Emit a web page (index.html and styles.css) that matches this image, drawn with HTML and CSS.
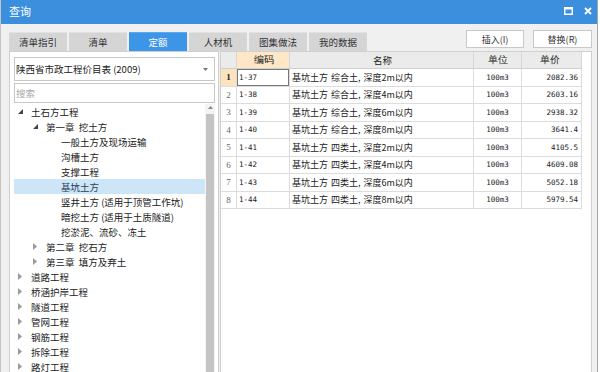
FILE: index.html
```html
<!DOCTYPE html>
<html lang="zh">
<head>
<meta charset="utf-8">
<title>查询</title>
<link rel="stylesheet" href="styles.css">
</head>
<body>
<div class="window">
  <div class="titlebar">
    <span class="title">查询</span>
    <div class="controls">
      <svg class="ico-max" width="9" height="8" viewBox="0 0 9 8"><rect x="0.75" y="0.75" width="7.5" height="6.5" fill="none" stroke="#fff" stroke-width="1.5"/><rect x="0" y="0" width="9" height="2.5" fill="#fff"/></svg>
      <svg class="ico-close" width="8" height="8" viewBox="0 0 8 8"><path d="M1 1L7 7M7 1L1 7" stroke="#fff" stroke-width="1.8"/></svg>
    </div>
  </div>
  <div class="body">
    <div class="topbar">
      <div class="tabs">
        <div class="tab">清单指引</div>
        <div class="tab">清单</div>
        <div class="tab active">定额</div>
        <div class="tab">人材机</div>
        <div class="tab">图集做法</div>
        <div class="tab">我的数据</div>
      </div>
      <div class="actions">
        <div class="btn btn-insert">插入(I)</div>
        <div class="btn btn-replace">替换(R)</div>
      </div>
    </div>
    <div class="main">
      <div class="left">
        <div class="select">
          <span>陕西省市政工程价目表 (2009)</span>
          <svg width="5" height="3" viewBox="0 0 5 3"><polygon points="0,0 5,0 2.5,3" fill="#777"/></svg>
        </div>
        <div class="search">搜索</div>
        <div class="treewrap">
          <div class="tree">
            <div class="node l0"><span class="exp"><svg width="5" height="5" viewBox="0 0 5 5"><polygon points="5,0 5,5 0,5" fill="#444"/></svg></span>土石方工程</div>
            <div class="node l1"><span class="exp"><svg width="5" height="5" viewBox="0 0 5 5"><polygon points="5,0 5,5 0,5" fill="#444"/></svg></span>第一章&nbsp; 挖土方</div>
            <div class="node l2"><span class="exp"></span>一般土方及现场运输</div>
            <div class="node l2"><span class="exp"></span>沟槽土方</div>
            <div class="node l2"><span class="exp"></span>支撑工程</div>
            <div class="node l2 selected"><span class="exp"></span>基坑土方</div>
            <div class="node l2"><span class="exp"></span>竖井土方 (适用于顶管工作坑)</div>
            <div class="node l2"><span class="exp"></span>暗挖土方 (适用于土质隧道)</div>
            <div class="node l2"><span class="exp"></span>挖淤泥、流砂、冻土</div>
            <div class="node l1"><span class="exp"><svg width="4" height="7" viewBox="0 0 4 7"><polygon points="0,0 4,3.5 0,7" fill="#999"/></svg></span>第二章&nbsp; 挖石方</div>
            <div class="node l1"><span class="exp"><svg width="4" height="7" viewBox="0 0 4 7"><polygon points="0,0 4,3.5 0,7" fill="#999"/></svg></span>第三章&nbsp; 填方及弃土</div>
            <div class="node l0"><span class="exp"><svg width="4" height="7" viewBox="0 0 4 7"><polygon points="0,0 4,3.5 0,7" fill="#999"/></svg></span>道路工程</div>
            <div class="node l0"><span class="exp"><svg width="4" height="7" viewBox="0 0 4 7"><polygon points="0,0 4,3.5 0,7" fill="#999"/></svg></span>桥涵护岸工程</div>
            <div class="node l0"><span class="exp"><svg width="4" height="7" viewBox="0 0 4 7"><polygon points="0,0 4,3.5 0,7" fill="#999"/></svg></span>隧道工程</div>
            <div class="node l0"><span class="exp"><svg width="4" height="7" viewBox="0 0 4 7"><polygon points="0,0 4,3.5 0,7" fill="#999"/></svg></span>管网工程</div>
            <div class="node l0"><span class="exp"><svg width="4" height="7" viewBox="0 0 4 7"><polygon points="0,0 4,3.5 0,7" fill="#999"/></svg></span>钢筋工程</div>
            <div class="node l0"><span class="exp"><svg width="4" height="7" viewBox="0 0 4 7"><polygon points="0,0 4,3.5 0,7" fill="#999"/></svg></span>拆除工程</div>
            <div class="node l0"><span class="exp"><svg width="4" height="7" viewBox="0 0 4 7"><polygon points="0,0 4,3.5 0,7" fill="#999"/></svg></span>路灯工程</div>
          </div>
          <div class="scrollbar">
            <svg class="up" width="5" height="3" viewBox="0 0 5 3"><polygon points="0,3 5,3 2.5,0" fill="#888"/></svg>
            <div class="thumb"></div>
          </div>
        </div>
      </div>
      <div class="grid">
        <div class="row head">
          <div class="c num"></div>
          <div class="c code hl">编码</div>
          <div class="c name center">名称</div>
          <div class="c unit">单位</div>
          <div class="c price center">单价</div>
        </div>
        <div class="row current">
          <div class="c num">1</div>
          <div class="c code sel">1-37</div>
          <div class="c name">基坑土方 综合土, 深度2m以内</div>
          <div class="c unit">100m3</div>
          <div class="c price">2082.36</div>
        </div>
        <div class="row">
          <div class="c num">2</div>
          <div class="c code">1-38</div>
          <div class="c name">基坑土方 综合土, 深度4m以内</div>
          <div class="c unit">100m3</div>
          <div class="c price">2603.16</div>
        </div>
        <div class="row">
          <div class="c num">3</div>
          <div class="c code">1-39</div>
          <div class="c name">基坑土方 综合土, 深度6m以内</div>
          <div class="c unit">100m3</div>
          <div class="c price">2938.32</div>
        </div>
        <div class="row">
          <div class="c num">4</div>
          <div class="c code">1-40</div>
          <div class="c name">基坑土方 综合土, 深度8m以内</div>
          <div class="c unit">100m3</div>
          <div class="c price">3641.4</div>
        </div>
        <div class="row">
          <div class="c num">5</div>
          <div class="c code">1-41</div>
          <div class="c name">基坑土方 四类土, 深度2m以内</div>
          <div class="c unit">100m3</div>
          <div class="c price">4105.5</div>
        </div>
        <div class="row">
          <div class="c num">6</div>
          <div class="c code">1-42</div>
          <div class="c name">基坑土方 四类土, 深度4m以内</div>
          <div class="c unit">100m3</div>
          <div class="c price">4609.08</div>
        </div>
        <div class="row">
          <div class="c num">7</div>
          <div class="c code">1-43</div>
          <div class="c name">基坑土方 四类土, 深度6m以内</div>
          <div class="c unit">100m3</div>
          <div class="c price">5052.18</div>
        </div>
        <div class="row">
          <div class="c num">8</div>
          <div class="c code">1-44</div>
          <div class="c name">基坑土方 四类土, 深度8m以内</div>
          <div class="c unit">100m3</div>
          <div class="c price">5979.54</div>
        </div>
      </div>
    </div>
  </div>
</div>
</body>
</html>
```

FILE: styles.css
```css
* { box-sizing: border-box; }
html, body { margin: 0; padding: 0; background: #fff; }
body {
  width: 600px;
  height: 372px;
  overflow: hidden;
  font-family: "Noto Sans CJK SC", "Noto Sans", sans-serif;
  font-size: 9px;
  color: #222;
}
.window {
  width: 598px;
  height: 372px;
  display: flex;
  flex-direction: column;
  background: #f0f0f0;
  border-left: 1px solid #c4c4c4;
  border-right: 1px solid #a8a8a8;
  overflow: hidden;
}
.titlebar {
  height: 24px;
  flex: none;
  background: #3b8fdc;
  display: flex;
  align-items: center;
  padding: 0 5px 0 8px;
}
.title {
  color: #fff;
  font-size: 11px;
  line-height: 1;
  margin-top: -1px;
}
.controls {
  margin-left: auto;
  display: flex;
  align-items: center;
  gap: 11px;
  margin-top: -3px;
}
.controls svg { display: block; }
.body {
  flex: 1;
  display: flex;
  flex-direction: column;
  padding: 6px 5px 0 8px;
  min-height: 0;
}
.topbar {
  display: flex;
  align-items: flex-start;
  height: 21px;
  flex: none;
}
.tabs {
  display: flex;
  gap: 2px;
  margin-top: 2px;
}
.tab {
  width: 58px;
  height: 19px;
  background: #d5d5d5;
  border-top: 1px solid #e2e2e2;
  color: #333;
  display: flex;
  align-items: center;
  justify-content: center;
  font-size: 9.5px;
}
.tab.active {
  background: #3c95e6;
  border-top-color: #5aa8ee;
  color: #fff;
}
.actions {
  margin-left: auto;
  display: flex;
  gap: 9px;
}
.btn {
  height: 18px;
  background: #fff;
  border: 1px solid #c8c8c8;
  display: flex;
  align-items: center;
  justify-content: center;
  color: #333;
  font-size: 9px;
}
.btn-insert { width: 58px; }
.btn-replace { width: 59px; }
.main {
  flex: 1;
  display: flex;
  min-height: 0;
}
.left {
  width: 210px;
  margin-right: 1px;
  background: #fff;
  border: 1px solid #cfcfcf;
  border-bottom: none;
  padding: 5px 3px 0 4px;
  display: flex;
  flex-direction: column;
}
.select {
  height: 24px;
  border: 1px solid #c8c8c8;
  display: flex;
  align-items: center;
  padding: 0 6px 0 1px;
  font-size: 9.5px;
  color: #222;
}
.select svg { margin-left: auto; display: block; }
.search {
  margin-top: 2px;
  height: 20px;
  border: 1px solid #c8c8c8;
  display: flex;
  align-items: center;
  padding-left: 1px;
  color: #a8a8a8;
  font-size: 9.5px;
}
.treewrap {
  flex: 1;
  display: flex;
  min-height: 0;
  padding-top: 1px;
}
.tree { flex: 1; }
.node {
  height: 15px;
  display: flex;
  align-items: center;
  font-size: 9.5px;
  color: #222;
  white-space: nowrap;
}
.node.l0 { padding-left: 4px; }
.node.l1 { padding-left: 19px; }
.node.l2 { padding-left: 34px; }
.node.selected { background: #cce5f7; color: #2a3e55; }
.exp {
  width: 13px;
  flex: none;
  display: flex;
  align-items: center;
}
.exp svg { display: block; }
.scrollbar {
  width: 10px;
  flex: none;
  background: #f4f4f4;
  display: flex;
  flex-direction: column;
  align-items: center;
}
.scrollbar .up { margin-top: 2px; display: block; }
.thumb {
  margin-top: 5px;
  width: 8px;
  flex: 1;
  background: #c4c4c4;
}
.grid {
  flex: 1;
  background: #fff;
  border: 1px solid #cfcfcf;
  border-bottom: none;
}
.row {
  display: grid;
  grid-template-columns: 16px 53px 184px 48px 60px;
  height: 17.5px;
}
.row.head { height: 17px; }
.c {
  border-right: 1px solid #dcdcdc;
  border-bottom: 1px solid #dcdcdc;
  display: flex;
  align-items: center;
  white-space: nowrap;
  overflow: hidden;
}
.head .c {
  background: #ebebeb;
  border-right-color: #d6d6d6;
  border-bottom-color: #d0d0d0;
  font-size: 9.5px;
  color: #222;
  justify-content: center;
}
.head .c.hl { background: #fde7c6; }
.num {
  justify-content: center;
  font-family: "Liberation Serif", serif;
  font-size: 9px;
  color: #666;
}
.current .num { background: #fbe3bd; color: #222; font-weight: bold; }
.code {
  padding-left: 2px;
  font-family: "DejaVu Sans Mono", monospace;
  font-size: 7.5px;
  color: #222;
}
.code.sel { box-shadow: inset 0 0 0 1px #777; }
.name {
  padding-left: 2px;
  font-size: 9px;
  color: #222;
  word-spacing: 1px;
}
.unit {
  justify-content: center;
  font-family: "DejaVu Sans Mono", monospace;
  font-size: 7.5px;
  color: #222;
}
.price {
  justify-content: flex-end;
  padding-right: 3px;
  font-family: "DejaVu Sans Mono", monospace;
  font-size: 7.5px;
  color: #222;
}
```
